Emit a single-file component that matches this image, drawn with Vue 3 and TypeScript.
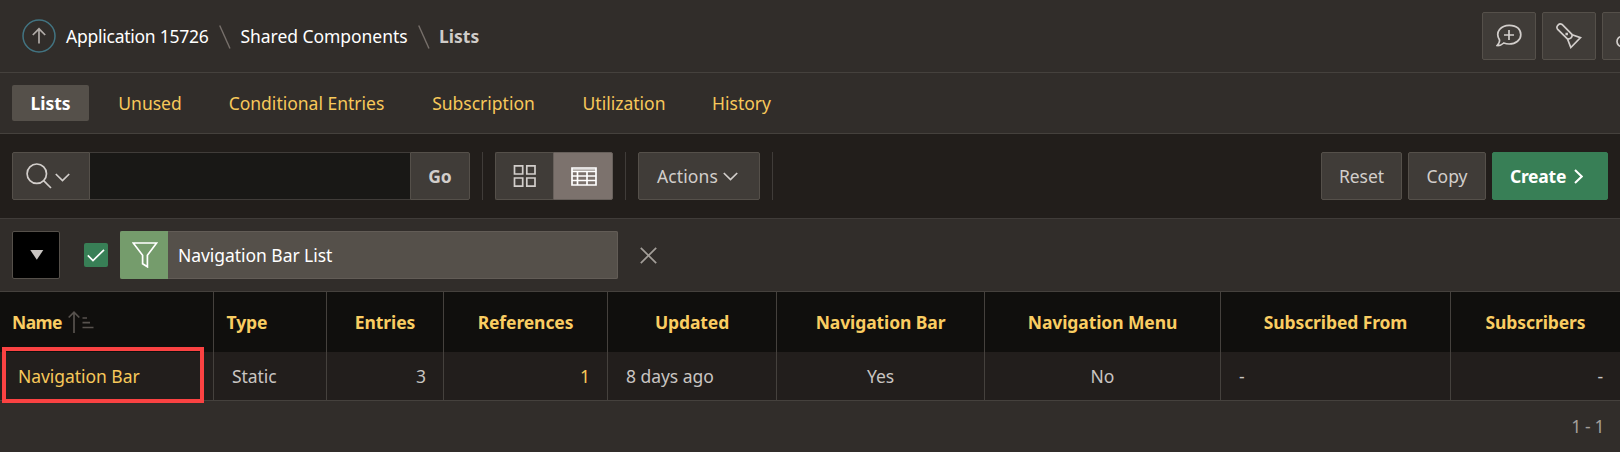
<script setup lang="ts">
interface Column {
  label: string
  value: string
  align: 'left' | 'center' | 'right'
  link?: boolean
}

const tabs: string[] = ['Lists', 'Unused', 'Conditional Entries', 'Subscription', 'Utilization', 'History']

const columns: Column[] = [
  { label: 'Name', value: 'Navigation Bar', align: 'left', link: true },
  { label: 'Type', value: 'Static', align: 'left' },
  { label: 'Entries', value: '3', align: 'right' },
  { label: 'References', value: '1', align: 'right', link: true },
  { label: 'Updated', value: '8 days ago', align: 'left' },
  { label: 'Navigation Bar', value: 'Yes', align: 'center' },
  { label: 'Navigation Menu', value: 'No', align: 'center' },
  { label: 'Subscribed From', value: '-', align: 'left' },
  { label: 'Subscribers', value: '-', align: 'right' },
]
</script>

<template>
  <div class="page">
    <header class="top">
      <svg class="up" width="34" height="34" viewBox="0 0 34 34">
        <circle cx="17" cy="17" r="16" stroke="#427482" stroke-width="1.5" />
        <path d="M17 24.5V9.8M10.8 16L17 9.8L23.2 16" stroke="#b0aba7" stroke-width="1.7" />
      </svg>
      <span class="crumb first">Application 15726</span>
      <svg class="slash" width="12" height="24" viewBox="0 0 12 24"><path d="M.7.5L11 23.5" stroke="#77706b" stroke-width="1.4" /></svg>
      <span class="crumb second">Shared Components</span>
      <svg class="slash" width="12" height="24" viewBox="0 0 12 24"><path d="M.7.5L11 23.5" stroke="#77706b" stroke-width="1.4" /></svg>
      <b class="crumb here">Lists</b>
      <div class="tools">
        <button class="btn">
          <svg width="26" height="24" viewBox="0 0 26 24">
            <path d="M3.2 15.2C-1 8 5 1.4 13.2 1.4S24.8 5.7 24.8 10.7S20 20 13.2 20C11 20 9.3 19.6 7.8 19C6 20.7 3.8 21.7 1.1 21.5C3.3 19.3 4.2 17.3 3.2 15.2Z" />
            <path d="M13 6v10M8 11h10" />
          </svg>
        </button>
        <button class="btn">
          <svg width="26" height="26" viewBox="0 0 26 26">
            <path d="M11.6 16.1L1.5 6.1C-.4 3.3 3.3-.4 6.1 1.5L16.2 11.7L24.5 14.6L14.8 24.5Z" />
            <path d="M11.6 16.1C14.5 16 16.3 14.2 16.2 11.7M10.3 10.7h.8v.8h-.8z" />
          </svg>
        </button>
        <button class="btn">
          <svg width="26" height="26" viewBox="0 0 26 26">
            <circle cx="6" cy="18.5" r="5" /><path d="M9.5 15L19 5" />
          </svg>
        </button>
      </div>
    </header>

    <nav class="tabs">
      <a v-for="(tab, i) in tabs" :key="tab" :class="['tab', { active: i === 0 }]">{{ tab }}</a>
    </nav>

    <section class="toolbar">
      <button class="btn search">
        <svg width="26" height="26" viewBox="0 0 26 26"><circle cx="10.8" cy="10.7" r="9.7" /><path d="M17.6 17.7L25 25" /></svg>
        <svg class="chev" width="15" height="9" viewBox="0 0 15 9"><path d="M.8 1L7.5 7.6L14.2 1" /></svg>
      </button>
      <input class="query" type="text" aria-label="Search" />
      <button class="btn go">Go</button>
      <i class="rule" />
      <div class="views">
        <button class="btn grid-view">
          <svg width="24" height="22" viewBox="0 0 24 22">
            <path d="M1.5.8h8.2v8.2h-8.2zM13.8.8h8.2v8.2h-8.2zM1.5 13h8.2v8.2h-8.2zM13.8 13h8.2v8.2h-8.2z" />
          </svg>
        </button>
        <button class="btn report-view">
          <svg width="26" height="19" viewBox="0 0 26 19">
            <path d="M1 1h24v17H1zM1 4.5h24M1 9h24M1 13.5h24M6.5 4.5v13.5M16 4.5v13.5" />
            <path d="M1 2.5h24" opacity=".6" />
          </svg>
        </button>
      </div>
      <i class="rule" />
      <button class="btn actions">
        Actions
        <svg width="15" height="9" viewBox="0 0 15 9"><path d="M.8 1L7.5 7.6L14.2 1" /></svg>
      </button>
      <i class="rule" />
      <div class="right">
        <button class="btn reset">Reset</button>
        <button class="btn copy">Copy</button>
        <button class="btn create">
          Create
          <svg width="9" height="15" viewBox="0 0 9 15"><path d="M1 1L7.7 7.5L1 14" /></svg>
        </button>
      </div>
    </section>

    <section class="filters">
      <button class="toggle"><svg width="14" height="10" viewBox="0 0 14 10"><path d="M.3 0h13L6.8 9.8z" /></svg></button>
      <span class="check"><svg width="18" height="13" viewBox="0 0 18 13"><path d="M.8 6.3L6 11.5L17 .8" /></svg></span>
      <div class="chip">
        <span class="funnel">
          <svg width="26" height="26" viewBox="0 0 26 26"><path d="M1.2 1h23.4L15.4 13.3V24.8L10.6 21.7V13.3Z" /></svg>
        </span>
        <span class="chip-text">Navigation Bar List</span>
      </div>
      <svg class="close" width="17" height="17" viewBox="0 0 17 17"><path d="M.8.8L16.2 16.2M16.2.8L.8 16.2" /></svg>
    </section>

    <section class="report">
      <div class="row head">
        <div v-for="(col, i) in columns" :key="col.label" :class="['cell', { start: i < 2, sorted: i === 0 }]">
          <span>{{ col.label }}</span>
          <svg v-if="i === 0" class="sort" width="26" height="22" viewBox="0 0 26 22">
            <path d="M6 22V1.2M.7 6.5L6 1.2L11.3 6.5M14.5 7h4.5M14.5 11.6h7.5M14.5 16.5h11" />
          </svg>
        </div>
      </div>
      <div class="row body">
        <div v-for="col in columns" :key="col.label" :class="['cell', col.align, { link: col.link }]">{{ col.value }}</div>
      </div>
      <div class="highlight" />
    </section>

    <footer class="footer">1 - 1</footer>
  </div>
</template>

<style>
body {
  margin: 0;
  background: #312d2a;
}
</style>

<style scoped>
* {
  box-sizing: border-box;
}
.page {
  width: 100%;
  height: 452px;
  overflow: hidden;
  background: #312d2a;
  color: #c9c5c2;
  font: 17.5px/24px "Noto Sans", "Open Sans", sans-serif;
  letter-spacing: -0.05px;
  white-space: nowrap;
}
svg {
  display: block;
  flex: none;
  fill: none;
  stroke: currentColor;
  stroke-width: 1.7;
}
.top {
  display: flex;
  align-items: center;
  height: 73px;
  padding-left: 22px;
  border-bottom: 1px solid #45413d;
  overflow: hidden;
}
.crumb {
  color: #fff;
}
.first {
  width: 143px;
  margin: 0 10px;
  letter-spacing: -0.25px;
}
.second {
  width: 167px;
  margin: 0 10px 0 9.5px;
}
.here {
  margin-left: 9.5px;
  color: #cfcbc8;
  letter-spacing: 0;
}
.slash {
  margin-top: 2px;
}
.tools {
  display: flex;
  gap: 6px;
  width: 138px;
  margin-left: auto;
}
.btn {
  display: flex;
  flex: none;
  align-items: center;
  justify-content: center;
  height: 48px;
  margin: 0;
  padding: 0;
  border: 1.5px solid #55504a;
  border-radius: 2px;
  background: #403c38;
  color: #d2cecb;
  font: inherit;
  letter-spacing: inherit;
}
.tools .btn {
  width: 54px;
}
.tabs {
  display: grid;
  grid-template-columns: 77px 98px 191px 139px 118px 93px;
  column-gap: 12px;
  align-items: center;
  height: 61px;
  padding-left: 12px;
  border-bottom: 1px solid #45413d;
}
.tab {
  height: 36px;
  border-radius: 2px;
  color: #f7c85a;
  line-height: 36px;
  text-align: center;
  letter-spacing: 0;
}
.tab.active {
  background: #55504a;
  color: #fff;
  font-weight: 700;
}
.toolbar {
  display: flex;
  align-items: center;
  height: 85px;
  padding: 0 12px;
  border-bottom: 1px solid #403c39;
  background: #221e1b;
}
.search {
  gap: 3px;
  width: 78px;
  padding-right: 6px;
  border-radius: 2px 0 0 2px;
}
.search .chev {
  margin-top: 3px;
}
.query {
  width: 320px;
  height: 48px;
  padding: 0 12px;
  border: solid #403c39;
  border-width: 1px 0;
  outline: 0;
  background: #191816;
  color: #fff;
  font: inherit;
}
.go {
  width: 60px;
  border-radius: 0 2px 2px 0;
  font-weight: 700;
}
.rule {
  width: 1px;
  height: 48px;
  margin: 0 12px;
  background: #403c39;
}
.views {
  display: flex;
  width: 118px;
}
.grid-view {
  width: 58px;
  padding-left: 1px;
  border-right: 0;
  border-radius: 2px 0 0 2px;
}
.report-view {
  width: 60px;
  padding-left: 1px;
  border-color: #67605b;
  border-radius: 0 2px 2px 0;
  background: #7c726d;
  color: #fff;
}
.actions {
  gap: 5px;
  width: 122px;
  padding-right: 3px;
  letter-spacing: 0.1px;
}
.right {
  display: flex;
  gap: 6px;
  margin-left: auto;
}
.reset {
  width: 81px;
}
.copy {
  width: 78px;
}
.create {
  gap: 8px;
  width: 116px;
  padding-right: 7px;
  border-color: #387f56;
  background: #387f56;
  color: #fff;
  font-weight: 700;
  letter-spacing: -0.25px;
}
.create svg {
  stroke-width: 2;
}
.filters {
  display: flex;
  align-items: center;
  height: 73px;
  padding-left: 12px;
  border-bottom: 1px solid #45413d;
}
.toggle {
  display: grid;
  place-items: center;
  width: 48px;
  height: 48px;
  padding: 0 0 0 1px;
  border: 1.5px solid #55504a;
  border-radius: 2px;
  background: #000;
  color: #c9c5c2;
}
.toggle svg {
  fill: currentColor;
  stroke: none;
}
.check {
  display: grid;
  place-items: center;
  width: 24px;
  height: 24px;
  margin: 0 12px 0 24px;
  border-radius: 2px;
  background: #387f56;
  color: #fff;
}
.chip {
  display: flex;
  align-items: center;
  width: 498px;
  height: 48px;
  overflow: hidden;
  border-radius: 2px;
  background: #55504a;
  box-shadow: inset 0 0 0 1px #625c56;
  color: #fff;
}
.funnel {
  display: grid;
  place-items: center;
  width: 48px;
  height: 48px;
  padding-left: 1px;
  background: #759c6c;
}
.chip-text {
  margin-left: 10px;
}
.close {
  margin-left: 21.5px;
  color: #a39e99;
}
.report {
  position: relative;
}
.row {
  display: grid;
  grid-template-columns: 214px 113px 117px 164px 169px 208px 236px 230px 169px;
}
.cell {
  display: flex;
  align-items: center;
  justify-content: center;
  border-right: 1px solid #45413d;
}
.cell:last-child {
  border-right: 0;
}
.head {
  height: 60px;
  background: #100f0d;
  color: #facd62;
  font-weight: 700;
  letter-spacing: -0.1px;
}
.head .start {
  justify-content: flex-start;
  padding-left: 12.5px;
}
.head .sorted {
  padding-left: 12px;
  letter-spacing: -0.6px;
}
.sort {
  margin-left: 6px;
  color: #57524e;
}
.body {
  height: 49px;
  border-bottom: 1px solid #45413d;
  background: #221e1c;
}
.body .cell {
  padding: 0 18px;
}
.body .left {
  justify-content: flex-start;
}
.body .right {
  justify-content: flex-end;
  padding-right: 17px;
  margin-left: 0;
}
.body .link {
  color: #f7c85a;
}
.highlight {
  position: absolute;
  top: 55px;
  left: 2px;
  width: 202px;
  height: 56px;
  border: 4px solid #fb4242;
}
.footer {
  height: 51px;
  padding-right: 16px;
  color: #a39e99;
  letter-spacing: -0.4px;
  line-height: 50px;
  text-align: right;
}
</style>
